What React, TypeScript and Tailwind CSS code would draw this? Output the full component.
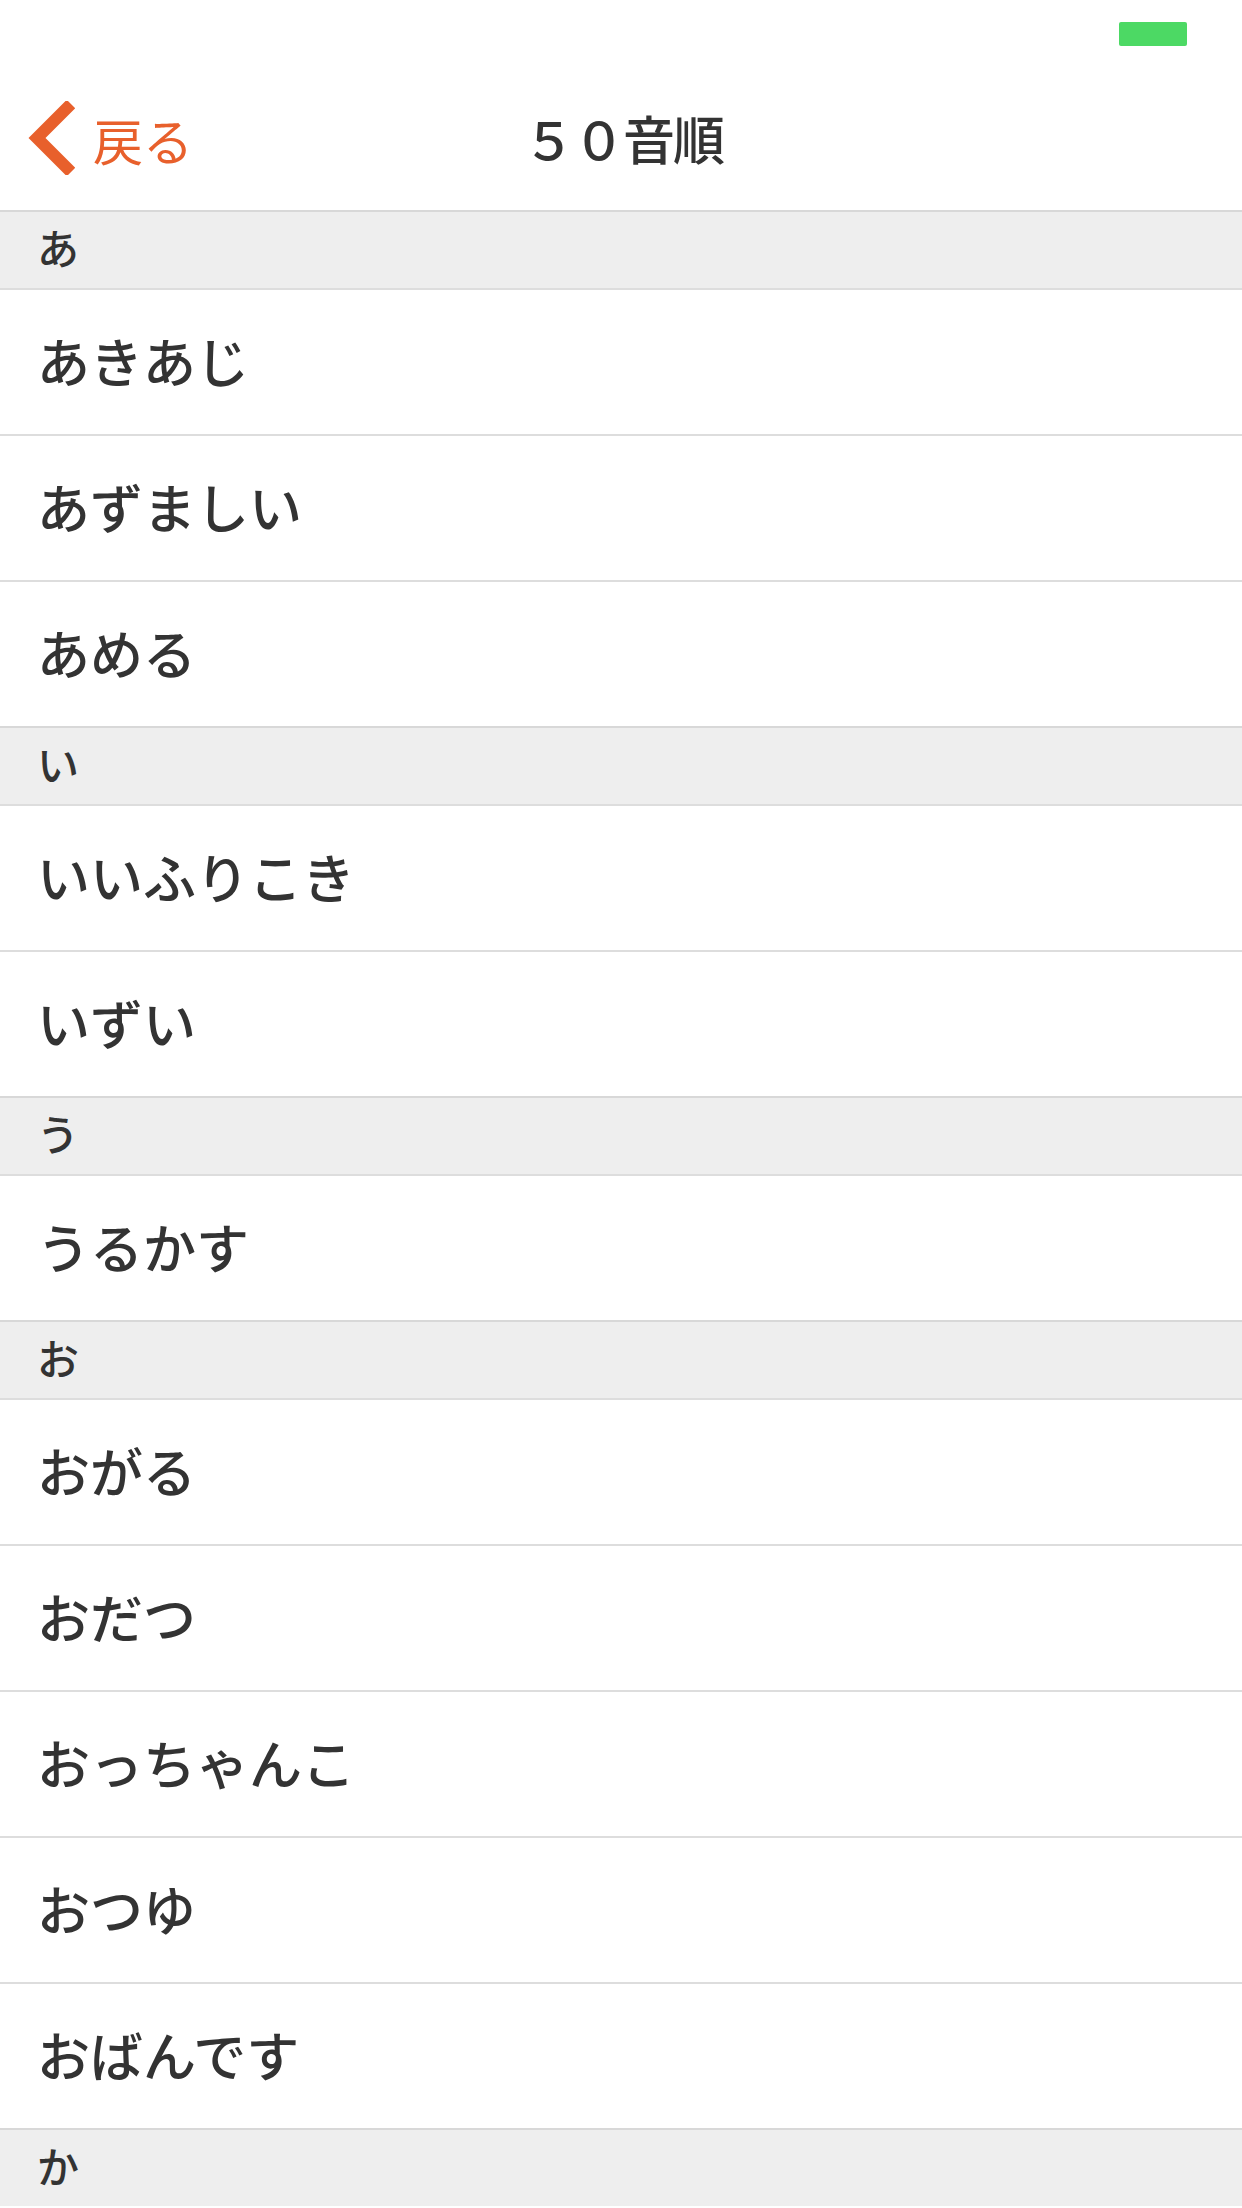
import React from "react";

type Item = { kind: "section" | "row"; text: string };

const items: Item[] = [
  { kind: "section", text: "あ" },
  { kind: "row", text: "あきあじ" },
  { kind: "row", text: "あずましい" },
  { kind: "row", text: "あめる" },
  { kind: "section", text: "い" },
  { kind: "row", text: "いいふりこき" },
  { kind: "row", text: "いずい" },
  { kind: "section", text: "う" },
  { kind: "row", text: "うるかす" },
  { kind: "section", text: "お" },
  { kind: "row", text: "おがる" },
  { kind: "row", text: "おだつ" },
  { kind: "row", text: "おっちゃんこ" },
  { kind: "row", text: "おつゆ" },
  { kind: "row", text: "おばんです" },
  { kind: "section", text: "か" },
];

export default function App() {
  return (
    <div
      className="w-[1242px] h-[2208px] overflow-hidden bg-white text-[#333333]"
      style={{ fontFamily: '"Noto Sans CJK JP", "Noto Sans", sans-serif' }}
    >
      {/* status bar */}
      <div className="h-[66px] flex justify-end items-start pt-[22px] pr-[55px]">
        <div className="w-[68px] h-[24px] bg-[#4cd964] rounded-[2px]" />
      </div>
      {/* nav bar */}
      <div className="h-[144px] grid grid-cols-[1fr_auto_1fr] items-center">
        <div className="flex items-center pl-[27px] gap-[18px] text-[#e8602c]">
          <svg width="48" height="74" viewBox="0 0 48 74" className="shrink-0">
            <path
              d="M44 3 L10 37 L44 71"
              fill="none"
              stroke="#e8602c"
              strokeWidth="12"
              strokeLinejoin="miter"
            />
          </svg>
          <span className="text-[50px] leading-none mt-[2px]">戻る</span>
        </div>
        <div className="text-[52px] leading-none pl-[4px] font-medium tracking-[-2px]">５０音順</div>
        <div />
      </div>
      {/* list */}
      <div className="flex flex-col">
        {items.map((it, i) =>
          it.kind === "section" ? (
            <div
              key={i}
              className="h-[78px] shrink-0 border-t-2 border-[#d8d8d8] bg-[#eeeeee] flex items-center pl-[37px]"
            >
              <span className="text-[42px] leading-none font-medium -mt-[6px]">{it.text}</span>
            </div>
          ) : (
            <div
              key={i}
              className="h-[146px] shrink-0 border-t-2 border-[#dddddd] bg-white flex items-center pl-[37px]"
            >
              <span className="text-[53px] leading-none font-medium -mt-[4px]">{it.text}</span>
            </div>
          )
        )}
      </div>
    </div>
  );
}
